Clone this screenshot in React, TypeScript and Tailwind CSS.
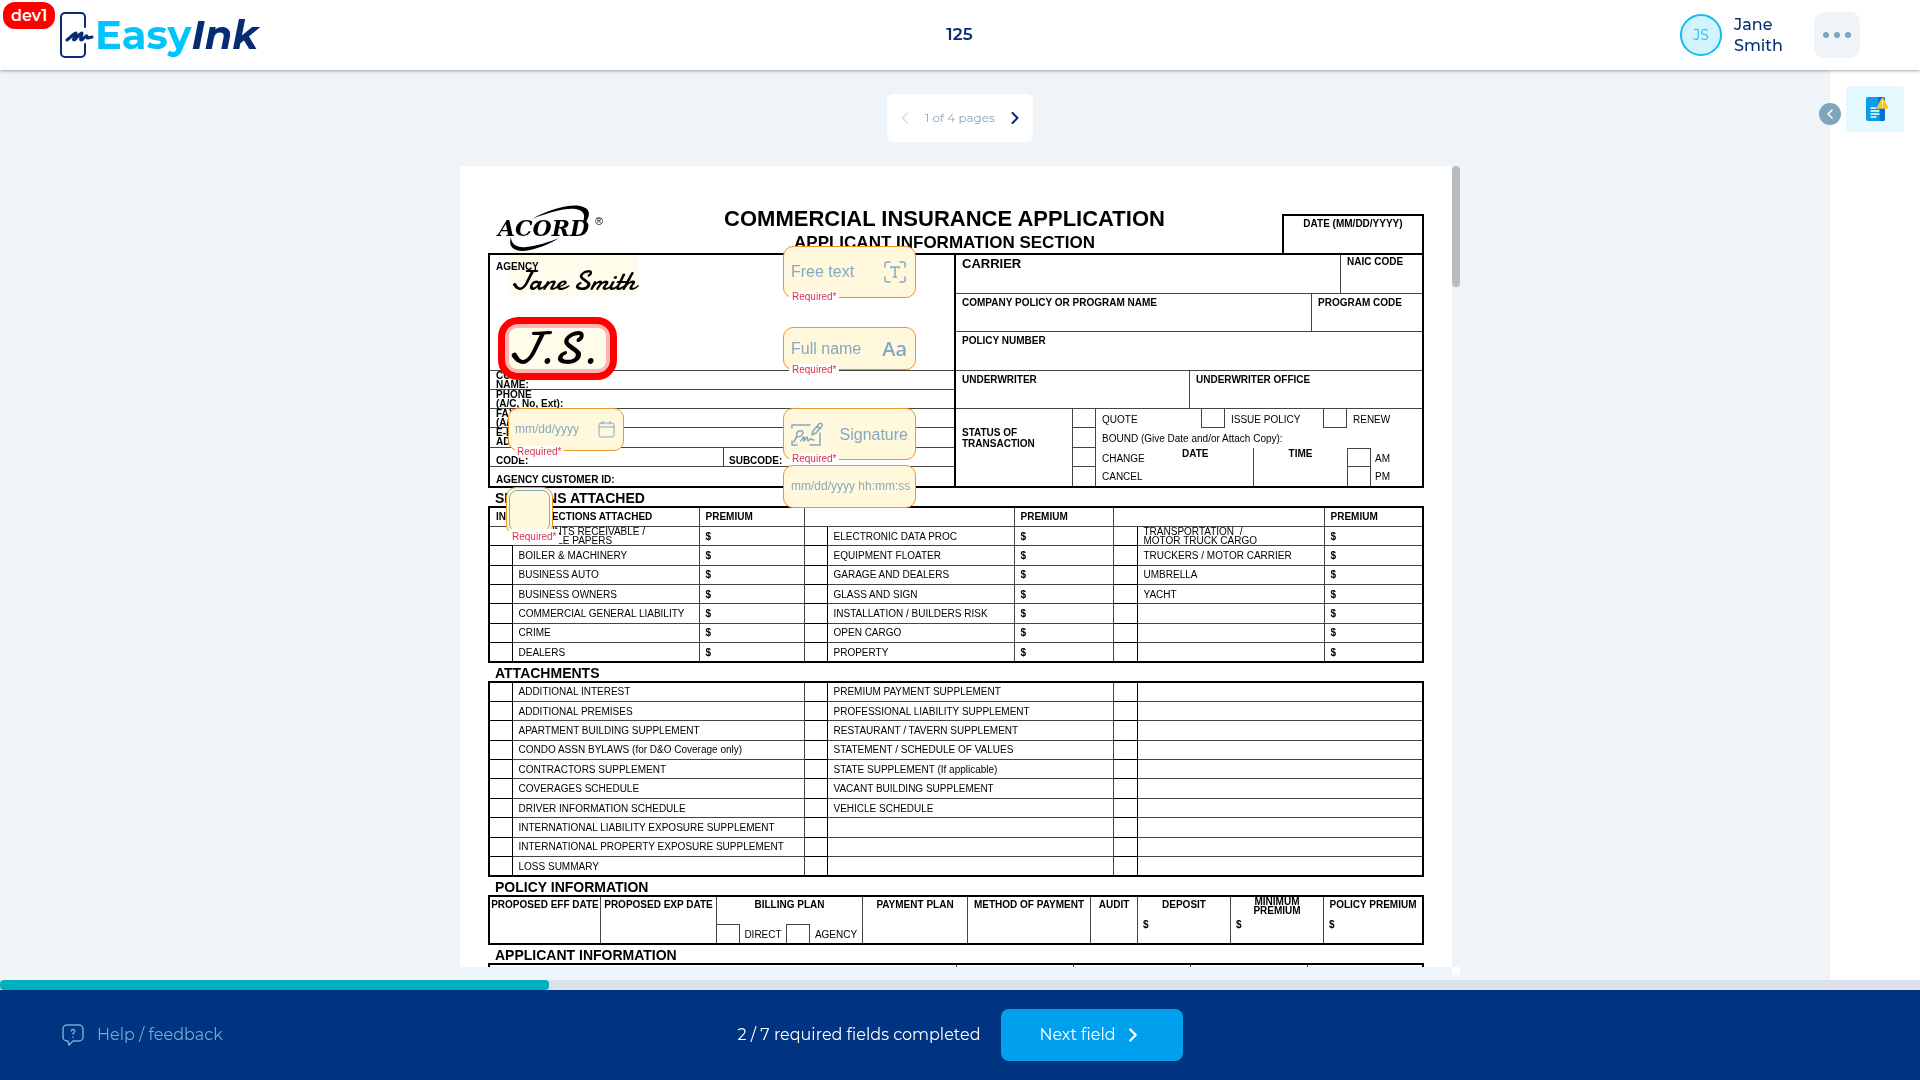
import React from 'react';
import { ChevronLeft, ChevronRight } from 'lucide-react';

const LINE = 'border-[#444]';

function PhoneSignLogo() {
  return (
    <svg width="36" height="48" viewBox="0 0 36 48" fill="none" stroke="#062c73" strokeLinecap="round" strokeLinejoin="round" aria-hidden="true">
      <path strokeWidth="2" d="M26 16V6a4 4 0 0 0-4-4H6a4 4 0 0 0-4 4v36a4 4 0 0 0 4 4h16a4 4 0 0 0 4-4V33" />
      <path strokeWidth="3" d="M8 29c4-3 7-7 9-7 1 1-4 7-2 7s5-7 8-7c1 1-3 6-1 7 2 0 3-3 5-4s0 2 2 2l4-1" />
    </svg>
  );
}

function Header() {
  return (
    <header className="relative z-10 grid h-[70px] shrink-0 grid-cols-[1fr_auto_1fr] items-center bg-white pl-[59px] pr-[60px] text-[#062c73] shadow-[0_1px_3px_rgba(0,0,0,0.35)]">
      <a href="#home" aria-label="EasyInk" className="flex items-center">
        <PhoneSignLogo />
        <span className="text-[40px] font-bold leading-[48px] text-[#00c4fd]">
          Easy<span className="italic text-[#062c73]">Ink</span>
        </span>
      </a>
      <h1 className="text-[17px] font-semibold">125</h1>
      <div className="flex items-center justify-end">
        <span className="flex size-[42px] items-center justify-center rounded-full border-2 border-[#12bdf0] bg-[#d2f3fc] text-[14px] text-[#12bdf0]">JS</span>
        <span className="ml-3 w-[80px] text-[16px] font-medium leading-[21px]">
          Jane
          <br />
          Smith
        </span>
        <button aria-label="More options" className="flex size-[46px] items-center justify-center gap-[5px] rounded-[10px] bg-[#eff4f9]">
          <i className="size-[6px] rounded-full bg-[#7fa5bd]" />
          <i className="size-[6px] rounded-full bg-[#7fa5bd]" />
          <i className="size-[6px] rounded-full bg-[#7fa5bd]" />
        </button>
      </div>
      <span className="absolute left-[3px] top-[2px] rounded-[12px] bg-[#ff0000] px-2 text-[16px] font-semibold leading-[27px] text-white">dev1</span>
    </header>
  );
}

function Pager() {
  return (
    <nav className="flex h-12 w-[146px] shrink-0 items-center justify-between rounded-md bg-white px-2 text-[#85a5bc]">
      <button aria-label="Previous page" disabled className="text-[#dcdfe2]">
        <ChevronLeft size={20} strokeWidth={2} />
      </button>
      <span className="text-[12px]">1 of 4 pages</span>
      <button aria-label="Next page" className="text-[#062c73]">
        <ChevronRight size={20} strokeWidth={2.5} />
      </button>
    </nav>
  );
}

function AcordLogo() {
  return (
    <svg className="absolute left-[36px] top-[38px]" width="112" height="50" viewBox="0 0 112 50" aria-label="ACORD">
      <path d="M36 15C52 6 72 0 84 2c10 2 11 8 6 16h-3c3-8 0-12-8-13-11-1-27 4-43 10z" />
      <path d="M15 33c0 8 7 11 15 10 11-1 23-5 33-9-9 6-24 12-36 13-10 0-15-5-12-14z" />
      <text x="2" y="32" fontSize="22" fontWeight="bold" fontStyle="italic" fontFamily="DejaVu Serif, serif">ACORD</text>
      <text x="99" y="21" fontSize="11" fontFamily="Liberation Sans, sans-serif">®</text>
    </svg>
  );
}

function Box({ className = '' }: { className?: string }) {
  return <span className={'block w-6 border-x border-b ' + LINE + ' ' + className} />;
}

function AgencyBlock() {
  return (
    <div className="grid grid-rows-12 border-r-2 border-black font-bold">
      <div className={'row-span-6 border-b pl-[6px] pt-[5px] ' + LINE}>AGENCY</div>
      <div className={'border-b pl-[6px] leading-[9px] ' + LINE}>CONTACT<br />NAME:</div>
      <div className={'border-b pl-[6px] leading-[9px] ' + LINE}>PHONE<br />(A/C, No, Ext):</div>
      <div className={'border-b pl-[6px] leading-[9px] ' + LINE}>FAX<br />(A/C, No):</div>
      <div className={'border-b pl-[6px] leading-[9px] ' + LINE}>E-MAIL<br />ADDRESS:</div>
      <div className={'flex border-b ' + LINE}>
        <span className="w-[233px] pl-[6px] pt-[6px]">CODE:</span>
        <span className={'flex-1 border-l pl-[5px] pt-[6px] ' + LINE}>SUBCODE:</span>
      </div>
      <div className="pl-[6px] pt-[6px]">AGENCY CUSTOMER ID:</div>
    </div>
  );
}

function StatusBlock() {
  return (
    <div className="row-span-4 flex">
      <div className="w-[116px] pl-[6px] pt-[18px] font-bold leading-[11px]">STATUS OF<br />TRANSACTION</div>
      <div className="grid flex-1 grid-rows-4">
        <div className="flex items-center">
          <Box className="self-stretch" />
          <span className="w-[105px] pl-[6px] pt-0.5">QUOTE</span>
          <Box className="self-stretch" />
          <span className="w-[98px] pl-[6px] pt-0.5">ISSUE POLICY</span>
          <Box className="self-stretch" />
          <span className="pl-[6px] pt-0.5">RENEW</span>
        </div>
        <div className="flex items-center">
          <Box className="self-stretch" />
          <span className="pl-[6px] pt-0.5">BOUND (Give Date and/or Attach Copy):</span>
        </div>
        <div className="row-span-2 flex">
          <div className="grid grid-rows-2">
            <Box />
            <Box className="border-b-0" />
          </div>
          <div className="grid w-[63px] grid-rows-2 items-center pl-[6px] pt-0.5">
            <span>CHANGE</span>
            <span>CANCEL</span>
          </div>
          <div className={'w-[95px] border-r pl-[23px] font-bold leading-[11px] ' + LINE}>DATE</div>
          <div className="w-[93px] text-center font-bold leading-[11px]">TIME</div>
          <div className="grid grid-rows-2">
            <Box className="border-t" />
            <Box className="border-b-0" />
          </div>
          <div className="grid grid-rows-2 items-center pl-1 pt-0.5">
            <span>AM</span>
            <span>PM</span>
          </div>
        </div>
      </div>
    </div>
  );
}

function CarrierBlock() {
  return (
    <div className="grid grid-rows-12">
      <div className={'row-span-2 flex border-b font-bold ' + LINE}>
        <span className="flex-1 pl-[6px] pt-[2px] text-[13px]">CARRIER</span>
        <span className={'w-[82px] border-l pl-[6px] ' + LINE}>NAIC CODE</span>
      </div>
      <div className={'row-span-2 flex border-b font-bold ' + LINE}>
        <span className="flex-1 pl-[6px] pt-[2px]">COMPANY POLICY OR PROGRAM NAME</span>
        <span className={'w-[111px] border-l pl-[6px] pt-[2px] ' + LINE}>PROGRAM CODE</span>
      </div>
      <div className={'row-span-2 border-b pl-[6px] pt-[2px] font-bold ' + LINE}>POLICY NUMBER</div>
      <div className={'row-span-2 grid grid-cols-2 border-b font-bold ' + LINE}>
        <span className="pl-[6px] pt-[2px]">UNDERWRITER</span>
        <span className={'border-l pl-[6px] pt-[2px] ' + LINE}>UNDERWRITER OFFICE</span>
      </div>
      <StatusBlock />
    </div>
  );
}

const SECTIONS: string[][] = [
  ['ACCOUNTS RECEIVABLE /\nVALUABLE PAPERS', 'ELECTRONIC DATA PROC', 'TRANSPORTATION  /\nMOTOR TRUCK CARGO'],
  ['BOILER & MACHINERY', 'EQUIPMENT FLOATER', 'TRUCKERS / MOTOR CARRIER'],
  ['BUSINESS AUTO', 'GARAGE AND DEALERS', 'UMBRELLA'],
  ['BUSINESS OWNERS', 'GLASS AND SIGN', 'YACHT'],
  ['COMMERCIAL GENERAL LIABILITY', 'INSTALLATION / BUILDERS RISK', ''],
  ['CRIME', 'OPEN CARGO', ''],
  ['DEALERS', 'PROPERTY', ''],
];

const ATTACHMENTS: string[][] = [
  ['ADDITIONAL INTEREST', 'PREMIUM PAYMENT SUPPLEMENT'],
  ['ADDITIONAL PREMISES', 'PROFESSIONAL LIABILITY SUPPLEMENT'],
  ['APARTMENT BUILDING SUPPLEMENT', 'RESTAURANT / TAVERN SUPPLEMENT'],
  ['CONDO ASSN BYLAWS (for D&O Coverage only)', 'STATEMENT / SCHEDULE OF VALUES'],
  ['CONTRACTORS SUPPLEMENT', 'STATE SUPPLEMENT (If applicable)'],
  ['COVERAGES SCHEDULE', 'VACANT BUILDING SUPPLEMENT'],
  ['DRIVER INFORMATION SCHEDULE', 'VEHICLE SCHEDULE'],
  ['INTERNATIONAL LIABILITY EXPOSURE SUPPLEMENT', ''],
  ['INTERNATIONAL PROPERTY EXPOSURE SUPPLEMENT', ''],
  ['LOSS SUMMARY', ''],
];

const TICK = 'border border-black p-0';
const CELL = 'h-[19px] whitespace-pre border border-[#444] py-0 pl-[6px] pr-0 text-left';

function SectionsTable() {
  return (
    <table className="h-[157px] w-full table-fixed border-collapse border-2 border-black leading-[9px]">
      <colgroup>
        <col className="w-[23px]" /><col className="w-[187px]" /><col className="w-[105px]" />
        <col className="w-[23px]" /><col className="w-[187px]" /><col className="w-[99px]" />
        <col className="w-[24px]" /><col /><col className="w-[99px]" />
      </colgroup>
      <tbody>
        <tr>
          <th colSpan={2} className={CELL}>INDICATE SECTIONS ATTACHED</th>
          <th className={CELL}>PREMIUM</th>
          <th colSpan={2} className={CELL} />
          <th className={CELL}>PREMIUM</th>
          <th colSpan={2} className={CELL} />
          <th className={CELL}>PREMIUM</th>
        </tr>
        {SECTIONS.map((row, i) => (
          <tr key={i}>
            {row.map((name, j) => (
              <React.Fragment key={j}>
                <td className={TICK} />
                <td className={CELL}>{name}</td>
                <td className={CELL + ' font-bold'}>$</td>
              </React.Fragment>
            ))}
          </tr>
        ))}
      </tbody>
    </table>
  );
}

function AttachmentsTable() {
  return (
    <table className="h-[196px] w-full table-fixed border-collapse border-2 border-black leading-[9px]">
      <colgroup>
        <col className="w-[23px]" /><col className="w-[292px]" />
        <col className="w-[23px]" /><col className="w-[286px]" />
        <col className="w-[24px]" /><col />
      </colgroup>
      <tbody>
        {ATTACHMENTS.map((row, i) => (
          <tr key={i}>
            <td className={TICK} />
            <td className={CELL}>{row[0]}</td>
            <td className={TICK} />
            <td className={CELL}>{row[1]}</td>
            <td className={TICK} />
            <td className={CELL} />
          </tr>
        ))}
      </tbody>
    </table>
  );
}

function SectionTitle({ children }: { children: React.ReactNode }) {
  return <h3 className="h-[18px] pl-[7px] text-[14px] font-bold leading-[20px]">{children}</h3>;
}

const POLICY = 'border-r border-[#444] pt-px';

function PolicyInformation() {
  return (
    <div className="grid h-[50px] grid-cols-[111px_116px_146px_105px_123px_47px_93px_93px_1fr] border-2 border-black text-center font-bold">
      <div className={POLICY}>PROPOSED EFF DATE</div>
      <div className={POLICY}>PROPOSED EXP DATE</div>
      <div className={'flex flex-col justify-between ' + POLICY}>
        <span>BILLING PLAN</span>
        <span className="flex h-[19px] items-center font-normal">
          <Box className="-ml-px self-stretch border-b-0 border-t" />
          <span className="w-[46px] pt-0.5 text-center">DIRECT</span>
          <Box className="self-stretch border-b-0 border-t" />
          <span className="flex-1 pt-0.5 text-center">AGENCY</span>
        </span>
      </div>
      <div className={POLICY}>PAYMENT PLAN</div>
      <div className={POLICY}>METHOD OF PAYMENT</div>
      <div className={POLICY}>AUDIT</div>
      <div className={POLICY}>DEPOSIT<p className="mt-[7px] pl-[5px] text-left">$</p></div>
      <div className="border-r border-[#444] leading-[9px]">MINIMUM<br />PREMIUM<p className="mt-[5px] pl-[5px] text-left">$</p></div>
      <div className="pt-px">POLICY PREMIUM<p className="mt-[7px] pl-[5px] text-left">$</p></div>
    </div>
  );
}

const FIELD = 'absolute flex items-center rounded-[10px] border border-[#e8962e] bg-[#fff8dc] text-[#85a9c1]';
const SCRIPT_FONT = "font-['Satisfy','Damion','Cookie','Dancing_Script','Kaushan_Script','Courgette','Caveat','Liberation_Serif',serif]";

function Required({ className = '' }: { className?: string }) {
  return <span className={'absolute rounded-md bg-white px-[3px] text-[10px] leading-3 text-[#d9304f] ' + className}>Required*</span>;
}

function Fields() {
  return (
    <>
      <div className={SCRIPT_FONT + ' absolute left-[49px] top-[85px] h-[45px] w-[129px] bg-[#fffceb] text-center text-[29px] leading-[60px] mix-blend-multiply'}>
        <span className="whitespace-nowrap">Jane Smith</span>
      </div>
      <button className="absolute left-[38px] top-[151px] flex h-[63px] w-[119px] items-center rounded-[20px] border-[7px] border-[#ff0000] bg-[#ffb3b3] p-1">
        <span className={SCRIPT_FONT + ' flex h-full w-full items-center rounded-[8px] bg-[#fffdea] text-[46px] leading-[40px]'}>J.S.</span>
      </button>

      <label className={FIELD + ' left-[323px] top-[80px] h-[52px] w-[133px] pl-[7px] pr-[9px]'}>
        <input aria-label="Free text" placeholder="Free text" className="w-full min-w-0 flex-1 bg-transparent text-[16px] outline-none placeholder:text-[#85a9c1]" />
        <svg width="22" height="22" viewBox="0 0 22 22" fill="none" stroke="currentColor" strokeWidth="1.5" strokeLinecap="round">
          <path d="M1 6V3a2 2 0 0 1 2-2h3M16 1h3a2 2 0 0 1 2 2v3M21 16v3a2 2 0 0 1-2 2h-3M6 21H3a2 2 0 0 1-2-2v-3" />
          <path d="M7 7V6h8v1M11 6v10M9.500 16h3" />
        </svg>
        <Required className="left-[5px] top-[44px]" />
      </label>

      <label className={FIELD + ' left-[323px] top-[161px] h-[43px] w-[133px] pl-[7px] pr-[8px]'}>
        <input aria-label="Full name" placeholder="Full name" className="w-full min-w-0 flex-1 bg-transparent text-[16px] outline-none placeholder:text-[#85a9c1]" />
        <span className="font-['Open_Sans',sans-serif] text-[20px] font-semibold">Aa</span>
        <Required className="left-[5px] top-[36px]" />
      </label>

      <button className={FIELD + ' left-[323px] top-[242px] h-[52px] w-[133px] justify-between px-[7px]'}>
        <svg width="32" height="26" viewBox="0 0 32 26" fill="none" stroke="currentColor" strokeWidth="1.500" strokeLinecap="round" strokeLinejoin="round">
          <path d="M1 7V4h18M29 12v12H19M1 20v4h5" />
          <path d="M3 21c2-3 3-6 3-9 1-3 6-3 6 0s-4 4-6 4M10 20c1-2 2-4 3-4s-1 4 0 4 2-4 3-4 0 4 1 4 2-3 3-2 1 1 3 1" />
          <path d="M21 14l1-4 6-7c1-2 4 0 3 2l-6 7zM26 5l3 3" />
        </svg>
        <span className="text-[16px]">Signature</span>
        <Required className="left-[5px] top-[44px]" />
      </button>

      <label className={FIELD + ' left-[323px] top-[299px] h-[43px] w-[133px] pl-[7px]'}>
        <input aria-label="Date and time" placeholder="mm/dd/yyyy hh:mm:ss" className="w-full bg-transparent text-[12px] outline-none placeholder:text-[#85a9c1]" />
      </label>

      <label className={FIELD + ' left-[48px] top-[242px] h-[43px] w-[116px] pl-[6px] pr-2'}>
        <input aria-label="Date" placeholder="mm/dd/yyyy" className="w-full min-w-0 flex-1 bg-transparent text-[12px] outline-none placeholder:text-[#85a9c1]" />
        <svg width="17" height="17" viewBox="0 0 17 17" fill="none" stroke="currentColor" strokeLinecap="round">
          <rect x="1" y="2" width="15" height="14" rx="2" />
          <path d="M1 6h15M5 0v3M12 0v3" />
        </svg>
        <Required className="left-[5px] top-[37px]" />
      </label>

      <label className="absolute left-[46px] top-[321px] h-[48px] w-[47px] rounded-[10px] border border-[#e8962e] bg-[#fff8dc] p-[2px]">
        <input type="checkbox" aria-label="Required check box" className="block size-full appearance-none rounded-[8px] border border-[#85a9c1]" />
        <Required className="left-[2px] top-[41px] rounded-none leading-4" />
      </label>
    </>
  );
}

function DocumentPage() {
  return (
    <article className="relative h-full overflow-hidden bg-white px-7 font-['Liberation_Sans',Arial,sans-serif] text-[10px] leading-[13px] text-black">
      <AcordLogo />
      <div className="flex h-[87px] items-end">
        <div className="flex-1 pl-[119px] text-center font-bold">
          <h2 className="text-[22px] leading-[26px]">COMMERCIAL INSURANCE APPLICATION</h2>
          <p className="text-[17px] leading-[21px]">APPLICANT INFORMATION SECTION</p>
        </div>
        <div className="h-[39px] w-[142px] border-2 border-b-0 border-black pt-px text-center font-bold">DATE (MM/DD/YYYY)</div>
      </div>
      <div className="grid h-[235px] grid-cols-2 grid-rows-[minmax(0,1fr)] border-2 border-black">
        <AgencyBlock />
        <CarrierBlock />
      </div>
      <SectionTitle>SECTIONS ATTACHED</SectionTitle>
      <SectionsTable />
      <SectionTitle>ATTACHMENTS</SectionTitle>
      <AttachmentsTable />
      <SectionTitle>POLICY INFORMATION</SectionTitle>
      <PolicyInformation />
      <SectionTitle>APPLICANT INFORMATION</SectionTitle>
      <div className="grid h-10 grid-cols-[467px_117px_117px_117px_1fr] border-2 border-black">
        <i className="border-r border-[#444]" />
        <i className="border-r border-[#444]" />
        <i className="border-r border-[#444]" />
        <i className="border-r border-[#444]" />
      </div>
      <Fields />
    </article>
  );
}

function SidePanel() {
  return (
    <aside className="relative w-[90px] shrink-0 bg-white pl-4 pt-4">
      <button aria-label="Documents" className="flex h-[46px] w-[58px] items-center justify-center rounded-sm bg-[#e6f9ff]">
        <svg width="24" height="26" viewBox="0 0 24 26" className="ml-1">
          <rect x="1" y="1" width="19" height="24" rx="2" fill="#0a9bea" />
          <path d="M13 1h5a2 2 0 0 1 2 2v20a2 2 0 0 1-2 2h-3z" fill="#0073d4" />
          <path d="M5.500 12h6M5.500 15h9M5.500 18h9M5.500 21h6" stroke="#fff" strokeWidth="1.500" />
          <path d="M17.500 3 13 11.500h9z" fill="#ffc21a" stroke="#ffc21a" strokeWidth="2.500" strokeLinejoin="round" />
          <path d="M17.500 4.500v4M17.500 10v1" stroke="#fff" strokeWidth="1.200" />
        </svg>
      </button>
      <button aria-label="Collapse panel" className="absolute -left-[11px] top-[33px] flex size-[22px] items-center justify-center rounded-full bg-[#7fa5bd] text-white">
        <ChevronLeft size={16} strokeWidth={2.5} />
      </button>
    </aside>
  );
}

function Footer() {
  return (
    <footer className="grid h-[90px] shrink-0 grid-cols-[1fr_auto_1fr] items-center bg-[#003380] text-[16px] text-white">
      <a href="#help" className="flex items-center gap-3 pl-[61px] text-[#73a9d2]">
        <svg width="24" height="24" viewBox="0 0 24 24" fill="none" stroke="currentColor" strokeWidth="1.500" strokeLinecap="round" strokeLinejoin="round">
          <path d="M6 2h12a4 4 0 0 1 4 4v8a4 4 0 0 1-4 4h-6l-4 4-1-4H6a4 4 0 0 1-4-4V6a4 4 0 0 1 4-4z" />
          <path d="M10.300 8c.2-2 3.500-2 3.500 0 0 1.500-1.800 1.500-1.800 3M12 14v.2" />
        </svg>
        Help / feedback
      </a>
      <div className="flex items-center gap-5">
        <span>2 / 7 required fields completed</span>
        <button className="flex h-[52px] w-[182px] items-center justify-center gap-1.5 rounded-[8px] bg-[#00a0ee]">
          Next field
          <ChevronRight size={22} strokeWidth={2.5} />
        </button>
      </div>
    </footer>
  );
}

export default function App() {
  return (
    <div className="flex h-screen flex-col bg-[#eff4f9] font-['Montserrat',Inter,sans-serif]">
      <Header />
      <div className="flex min-h-0 flex-1">
        <main className="flex min-w-0 flex-1 flex-col items-center gap-6 pb-[5px] pl-[90px] pt-6">
          <Pager />
          <div className="grid min-h-0 w-full max-w-[1000px] flex-1 grid-cols-[1fr_8px] grid-rows-[minmax(0,1fr)_8px]">
            <DocumentPage />
            <div>
              <div className="h-[121px] rounded-sm bg-[#b9bbbe]" />
            </div>
            <div />
            <div className="bg-white" />
          </div>
        </main>
        <SidePanel />
      </div>
      <div role="progressbar" aria-label="Required fields completed" aria-valuenow={2} aria-valuemin={0} aria-valuemax={7} className="h-[10px] shrink-0 bg-[#dde1ec]">
        <div className="h-full w-2/7 rounded bg-[#00b0bd]" />
      </div>
      <Footer />
    </div>
  );
}
